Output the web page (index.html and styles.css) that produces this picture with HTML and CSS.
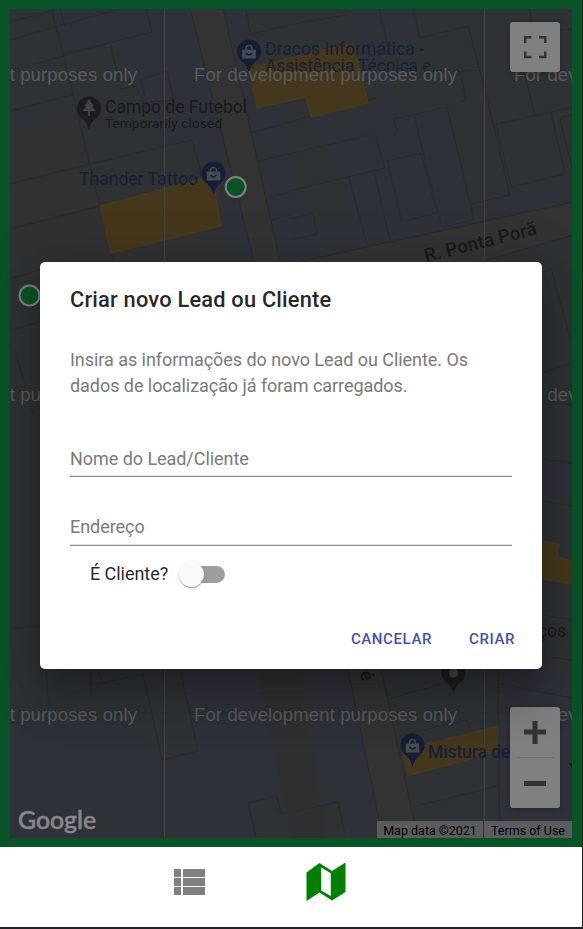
FILE: index.html
```html
<!DOCTYPE html>
<html lang="pt-BR">
<head>
<meta charset="utf-8">
<title>Leads e Clientes</title>
<link rel="stylesheet" href="styles.css">
</head>
<body>
<div class="app">
  <main class="map-frame">
    <section class="map">
      <svg class="map-canvas" viewBox="10 9 562 829">
        <defs>
          <g id="pin"><path d="M0 21C-1.500 14-5 11-8.500 8A12 12 0 1 1 8.500 8C5 11 1.500 14 0 21Z"/></g>
          <g id="bag"><path d="M-6.800-2.500H6.800V6.500H-6.800Z" fill="#454b55"/><path d="M-3-2V-3.500A3 3 0 0 1 3-3.500V-2" fill="none" stroke="#454b55" stroke-width="1.500"/><path d="M-3 1Q0 5 3 1" fill="none" stroke="#141f33" stroke-width="1.500"/></g>
        </defs>
        <rect x="10" y="9" width="562" height="829" fill="#2e3234"/>
        <g fill="#2e3138">
          <path d="M53 9H190L255 265H228L205 178L191 140L163 148L141 92L125 90L110 43L63 53Z"/>
          <path d="M224 9H245L262 80L283 128L310 220L420 234L285 265Z"/>
          <path d="M350 9H414L420 38L467 27L490 110L510 196L572 178V202L360 248L340 170L310 120L390 105L378 119L395 140L380 152L388 160L404 220Z"/>
          <path d="M10 112L42 102L52 148L40 145L30 126L10 130Z"/>
          <path d="M10 720L125 722L165 760L198 750L180 669H260L292 811L250 803L256 838H10Z"/>
          <path d="M300 669H350L383 838H344L338 802L290 815Z"/>
          <path d="M542 455L572 463V500L542 496Z"/>
          <path d="M500 669H572V838H498Z"/>
        </g>
        <path d="M190 140L203 180L100 206L90 164Z" fill="#2e3234"/>
        <path d="M63 54L110 43L163 145L90 164ZM391 58L468 26L490 110L510 195L471 204L447 107L397 117Z" fill="#2e3234"/>
        <path d="M10 130L72 110L102 206L111 253L10 230Z" fill="#2f3132"/>
        <path d="M10 230L100 206L111 253L220 226L230 265H10Z" fill="#2f3132"/>
        <path d="M258 669H300L325 838H292Z" fill="#2f3031"/>
        <g fill="#333334" stroke="#2a2b2d" stroke-width="1">
          <path d="M190 8L255 265H281L223 8Z"/>
          <path d="M573 202L285 265V275H435L573 235Z"/>
          <path d="M346 660L383 839H418L379 660Z"/>
        </g>
        <g fill="none" stroke="#292b2d" stroke-width="1">
          <path d="M10 40L90 17L121 9M146 9L152 32L63 54L52 12M10 22L53 11M60 9L65 26M10 71L110 43L121 89L136 86L143 103L174 100M10 111L72 95M63 54L100 206L111 253L115 265M10 184L90 164L192 140L203 180M10 229L100 206M141 80L167 71L176 110M141 80L147 105L157 103L165 145"/>
          <path d="M246 9L250 34L290 25L349 14M379 9L391 58M413 9L420 38L468 26L490 110L510 195L471 204M394 76L478 70M250 133L377 98M258 161L375 134M290 191L385 168L375 134M414 115L442 227L474 220L447 107M391 138L397 132L394 119L447 107M461 74L466 100L458 103M387 161L421 153L437 213L402 222ZM349 178L367 245M374 172L390 240M290 219L313 213L317 234L290 240M270 197L290 192M272 220L290 215M496 124L551 112L565 174L511 187ZM524 72L535 114M551 112L572 108M560 118L572 168M561 117L572 115M541 32L572 29M529 9L532 21L515 28"/>
          <path d="M12 278L40 270M12 330L40 322M15 350L33 414M542 275L551 268L570 338M542 373L572 363M542 402L572 405M542 459L572 463M542 501L572 506M542 615L572 620M542 656L572 660M12 628L40 626M46 669L49 710M90 669L92 700M98 669L102 683L143 674L162 760L198 751L180 669M10 723L50 720M248 803L277 796L281 814L292 811M248 803L256 838M290 813L338 802L345 834M388 699L498 669M398 736L467 720L471 731M498 669V720L500 838M500 684L572 698M417 806L498 786"/>
        </g>
        <g fill="#45371b" stroke="#4d3b1c" stroke-width="1">
          <path d="M249 68L340 46L353 43L368 103L311 117L306 97L257 108Z"/>
          <path d="M100 206L212 176L221 226L111 253Z"/>
          <path d="M402 750L498 726V751L408 776Z"/>
          <path d="M542 541L559 544L557 557L573 561V584L542 579Z"/>
        </g>
        <path d="M164.500 9V838M484.500 9V838" stroke="#414344"/>
        <g fill="#141f33"><use href="#pin" x="249" y="52"/><use href="#pin" x="213.500" y="174"/><use href="#pin" x="412.500" y="746"/></g>
        <use href="#bag" x="249" y="52"/><use href="#bag" x="213.500" y="174"/><use href="#bag" x="412.500" y="746"/>
        <use href="#pin" x="89" y="109" fill="#1c1d1e"/>
        <path d="M89 99L93.500 106H92L95.500 111H90V116H88V111H82.500L86 106H84.500Z" fill="#424344"/>
        <use href="#pin" x="453.500" y="673" fill="#1c1e20"/><circle cx="453.500" cy="673" r="4.500" fill="#424446"/>
        <g class="place">
          <text x="265" y="54.500" textLength="159">Dracos Informática -</text>
          <text x="265" y="72" textLength="178">Assistência Técnica e…</text>
          <text x="79" y="185" textLength="119">Thander Tattoo</text>
          <text class="bold" x="428" y="758" textLength="82">Mistura de</text>
        </g>
        <g class="dark-label">
          <text x="105" y="113" textLength="142">Campo de Futebol</text>
          <text class="small" x="105" y="128" textLength="117">Temporarily closed</text>
          <text x="538" y="637" textLength="28">ços</text>
          <text class="street" transform="translate(426 262) rotate(-14)" textLength="115">R. Ponta Porã</text>
          <text class="street" transform="translate(358 666) rotate(76)">ré</text>
          <text x="569" y="776">Y</text>
        </g>
        <g class="watermark">
          <text x="-126" y="80.500" textLength="263">For development purposes only</text><text x="194" y="80.500" textLength="263">For development purposes only</text><text x="514" y="80.500" textLength="263">For development purposes only</text>
          <text x="-126" y="400.500" textLength="263">For development purposes only</text><text x="514" y="400.500" textLength="263">For development purposes only</text>
          <text x="-126" y="720.500" textLength="263">For development purposes only</text><text x="194" y="720.500" textLength="263">For development purposes only</text><text x="514" y="720.500" textLength="263">For development purposes only</text>
        </g>
        <g fill="#085426" stroke="#808080" stroke-width="2"><circle cx="235.700" cy="187" r="10"/><circle cx="29.500" cy="295.500" r="10"/></g>
        <text class="google" x="18" y="829" textLength="78" lengthAdjust="spacingAndGlyphs">Google</text>
      </svg>
      <button class="map-button fullscreen" aria-label="Tela cheia">
        <svg width="24" height="24" viewBox="0 0 24 24" fill="none" stroke="#333" stroke-width="2.500"><path d="M2.200 8V2.200H8.500M16 2.200H22.300V8M22.300 16.500V22H16M8.500 22H2.200V16.500"/></svg>
      </button>
      <div class="map-button zoom">
        <svg width="50" height="50" viewBox="0 0 50 50" stroke="#333" stroke-width="5"><path d="M14 25H36M25 14V37"/></svg>
        <span class="zoom-divider"></span>
        <svg width="50" height="50" viewBox="0 0 50 50" stroke="#333" stroke-width="5"><path d="M14 25.500H36"/></svg>
      </div>
      <div class="attribution"><span>Map data ©2021</span><span>Terms of Use</span></div>
    </section>
  </main>
  <nav class="tabs">
    <svg class="list-icon" width="31" height="26" viewBox="0 0 31 26" fill="#808080"><path d="M0 0H7V8H0ZM9 0H31V8H9ZM0 9H7V17H0ZM9 9H31V17H9ZM0 18H7V26H0ZM9 18H31V26H9Z"/></svg>
    <svg class="map-icon" width="40" height="40" viewBox="0 0 40 40"><path fill="#008000" fill-rule="evenodd" d="M.5 10.500L13.500 1L26 9L39.500 .5V30L26 38.500L13.500 30.500L.5 39ZM15.200 5.500V28.500L24.800 34V11.200Z"/></svg>
  </nav>
  <div class="dialog" role="dialog">
    <h2>Criar novo Lead ou Cliente</h2>
    <div class="dialog-content">
      <p>Insira as informações do novo Lead ou Cliente. Os dados de localização já foram carregados.</p>
      <div class="field">Nome do Lead/Cliente</div>
      <div class="field address">Endereço</div>
      <div class="switch-row"><span class="switch-label">É Cliente?</span><span class="switch"><span class="thumb"></span></span></div>
    </div>
    <div class="actions"><button>CANCELAR</button><button>CRIAR</button></div>
  </div>
</div>
</body>
</html>
```
FILE: styles.css
```css
* { box-sizing: border-box; }
html { font-size: 18px; }
body { margin: 0; background: #202124; font-family: Roboto, sans-serif; overflow: hidden; }
button { border: 0; padding: 0; background: none; font: inherit; }

.app { position: relative; width: 582px; height: 927px; display: flex; flex-direction: column; }
.map-frame { height: 847px; padding: 9px 10px; background: #085426; }
.map { position: relative; height: 829px; overflow: hidden; }
.map-canvas { display: block; width: 562px; height: 829px; }

.place, .dark-label { font-size: 17.5px; }
.place { fill: #172033; }
.dark-label { fill: #181a1b; }
.bold { font-weight: 500; }
.small { font-size: 13.5px; }
.street { font-size: 18.5px; font-weight: 500; }
.watermark { font: 18.5px "Liberation Sans", sans-serif; fill: #5a5b5c; }
.google { font: 500 24px Lato, sans-serif; fill: #888; stroke: #888; stroke-width: .5px; }

.map-button { position: absolute; right: 12px; width: 50px; background: #808080; border-radius: 3px; box-shadow: 0 1px 5px rgba(0, 0, 0, .3); }
.fullscreen { top: 13px; height: 50px; display: grid; place-items: center; }
.zoom { bottom: 30px; height: 101px; display: flex; flex-direction: column; align-items: center; }
.zoom-divider { width: 37px; height: 1px; background: #737373; }
.attribution { position: absolute; right: 0; bottom: 0; display: flex; gap: 1px; font-size: 12.5px; line-height: 19px; color: #000; white-space: nowrap; }
.attribution span { height: 17px; background: #5b5c5e; text-align: center; width: 88px; }
.attribution span:first-child { width: 106px; }

.tabs { height: 80px; background: #fff; display: flex; align-items: flex-start; }
.list-icon { margin: 22px 0 0 174px; }
.map-icon { margin: 15px 0 0 101px; }

.dialog {
  position: absolute; left: 40px; top: 262px; width: 502px; height: 407px;
  background: #fff; border-radius: 5px; color: rgba(0, 0, 0, .87);
  box-shadow: 0 14px 19px -9px rgba(0, 0, 0, .2), 0 30px 48px 4px rgba(0, 0, 0, .14), 0 11px 58px 10px rgba(0, 0, 0, .12);
  clip-path: inset(-262px -40px -178px -40px);
}
.dialog h2 { margin: 0; padding: 20px 30px; font-size: 21.8px; font-weight: 500; line-height: 35px; letter-spacing: .0095em; }
.dialog-content { padding: 10px 30px 0; letter-spacing: -.05px; }
.dialog p { margin: 0; font-size: 18px; line-height: 26px; color: #7a7a7a; }
.field { margin-top: 40px; height: 38px; padding-top: 5px; line-height: 30px; color: #7a7a7a; border-bottom: 1px solid #8e8e8e; box-shadow: inset 0 -1px #e4e4e4; }
.field.address { margin-top: 29px; height: 40px; padding-top: 6px; }
.switch-row { display: flex; align-items: center; height: 55px; padding-left: 20px; }
.switch-label { width: 78px; white-space: nowrap; }
.switch { position: relative; width: 42px; height: 17px; margin-left: 15px; top: 1px; border-radius: 9px; background: #9e9e9e; }
.thumb { position: absolute; left: -4px; top: -4px; width: 25px; height: 25px; border-radius: 50%; background: #fafafa; box-shadow: 0 2px 1px -1px rgba(0, 0, 0, .2), 0 1px 1px rgba(0, 0, 0, .14), 0 1px 4px rgba(0, 0, 0, .12); }
.actions { display: flex; justify-content: flex-end; gap: 37px; padding: 22px 27px 0 0; font-size: 15px; font-weight: 500; line-height: 32px; letter-spacing: .04em; color: #3f51b5; }
.actions button { color: inherit; letter-spacing: inherit; }
```
